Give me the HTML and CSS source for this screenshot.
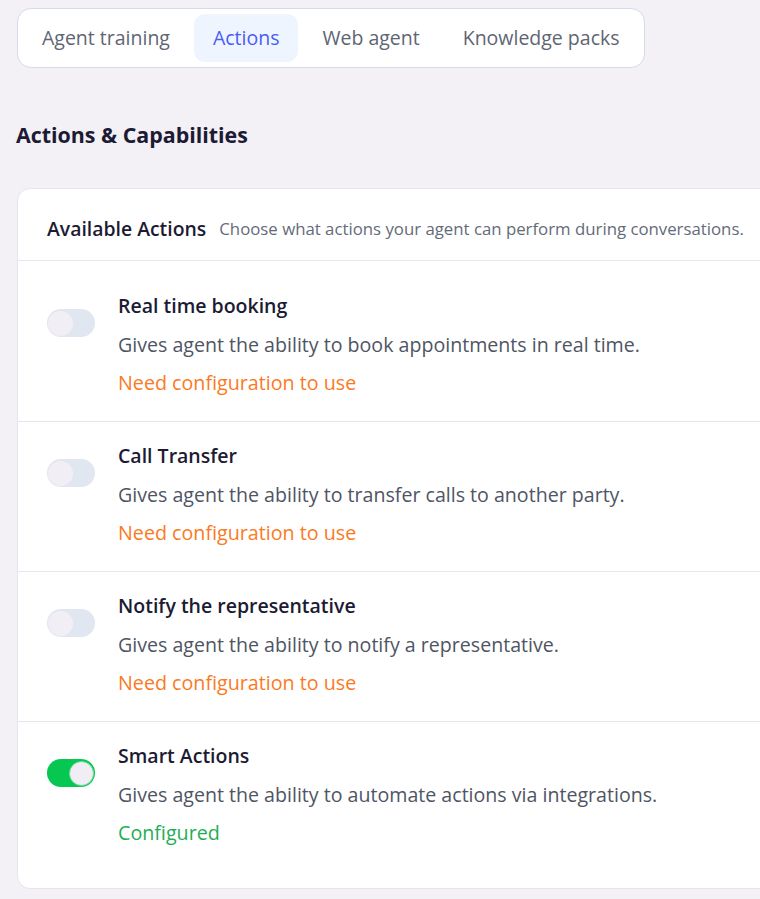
FILE: index.html
```html
<!DOCTYPE html>
<html lang="en">
<head>
<meta charset="utf-8">
<title>Actions &amp; Capabilities</title>
<link rel="stylesheet" href="styles.css">
</head>
<body>
<div class="page">
  <nav class="tabs">
    <div class="tab">Agent training</div>
    <div class="tab active">Actions</div>
    <div class="tab">Web agent</div>
    <div class="tab">Knowledge packs</div>
  </nav>

  <h1 class="heading">Actions &amp; Capabilities</h1>

  <section class="card">
    <header class="card-head">
      <span class="card-title">Available Actions</span>
      <span class="card-sub">Choose what actions your agent can perform during conversations.</span>
    </header>

    <div class="row first">
      <span class="toggle"><span class="knob"></span></span>
      <div class="info">
        <div class="name">Real time booking</div>
        <div class="desc">Gives agent the ability to book appointments in real time.</div>
        <div class="status warn">Need configuration to use</div>
      </div>
    </div>

    <div class="row">
      <span class="toggle"><span class="knob"></span></span>
      <div class="info">
        <div class="name">Call Transfer</div>
        <div class="desc">Gives agent the ability to transfer calls to another party.</div>
        <div class="status warn">Need configuration to use</div>
      </div>
    </div>

    <div class="row">
      <span class="toggle"><span class="knob"></span></span>
      <div class="info">
        <div class="name">Notify the representative</div>
        <div class="desc">Gives agent the ability to notify a representative.</div>
        <div class="status warn">Need configuration to use</div>
      </div>
    </div>

    <div class="row last">
      <span class="toggle on"><span class="knob"></span></span>
      <div class="info">
        <div class="name">Smart Actions</div>
        <div class="desc">Gives agent the ability to automate actions via integrations.</div>
        <div class="status ok">Configured</div>
      </div>
    </div>
  </section>
</div>
</body>
</html>
```

FILE: styles.css
```css
* { box-sizing: border-box; }

html, body {
  margin: 0;
  padding: 0;
  background: #f3f0f6;
  overflow: hidden;
}

body {
  font-family: "Open Sans", "Noto Sans", sans-serif;
  color: #1c1b33;
}

.page {
  padding: 8px 0 0 17px;
  width: 1000px;
}

.tabs {
  display: inline-flex;
  gap: 5px;
  padding: 5px;
  background: #ffffff;
  border: 1px solid #d3dbe6;
  border-radius: 14px;
}

.tab {
  height: 48px;
  line-height: 48px;
  padding: 0 19px;
  font-size: 19.5px;
  color: #5e6573;
  border-radius: 11px;
  white-space: nowrap;
}

.tab.active {
  background: #eef5ff;
  color: #4a5cf2;
}

.heading {
  margin: 52px 0 0 -1px;
  font-size: 21.4px;
  line-height: 30px;
  font-weight: 700;
  color: #1c1b33;
}

.card {
  margin-top: 38px;
  width: 900px;
  background: #ffffff;
  border: 1px solid #e6e4ec;
  border-radius: 13px;
}

.card-head {
  display: flex;
  align-items: center;
  gap: 13px;
  height: 72px;
  padding: 7px 29px 0;
  border-bottom: 1px solid #e7e6ee;
}

.card-title {
  font-size: 19.4px;
  font-weight: 600;
  color: #1c1b33;
}

.card-sub {
  font-size: 16.8px;
  color: #646b78;
}

.row {
  display: flex;
  align-items: flex-start;
  gap: 23px;
  padding: 15px 29px 19px;
  border-bottom: 1px solid #e7e6ee;
}

.row.first { padding-top: 26px; }
.row.last { padding-bottom: 36px; border-bottom: 0; }

.toggle {
  flex: none;
  position: relative;
  width: 48px;
  height: 28px;
  margin-top: 22px;
  border-radius: 14px;
  background: #e1e7f0;
}

.knob {
  position: absolute;
  top: 1.5px;
  left: 1px;
  width: 25px;
  height: 25px;
  border-radius: 50%;
  background: #f2eef5;
}

.toggle.on { background: #06c752; }
.toggle.on .knob {
  left: auto;
  right: 1px;
  background: #f0edf4;
  border: 1.5px solid #6fdc9a;
}

.info { display: flex; flex-direction: column; }

.name {
  font-size: 19.5px;
  line-height: 38px;
  font-weight: 600;
  color: #1c1b33;
}

.desc {
  font-size: 19.6px;
  line-height: 39px;
  color: #4f5563;
}

.status {
  font-size: 19.7px;
  line-height: 38px;
}

.status.warn { color: #fb7a1e; }
.status.ok { color: #1fae55; }
```
